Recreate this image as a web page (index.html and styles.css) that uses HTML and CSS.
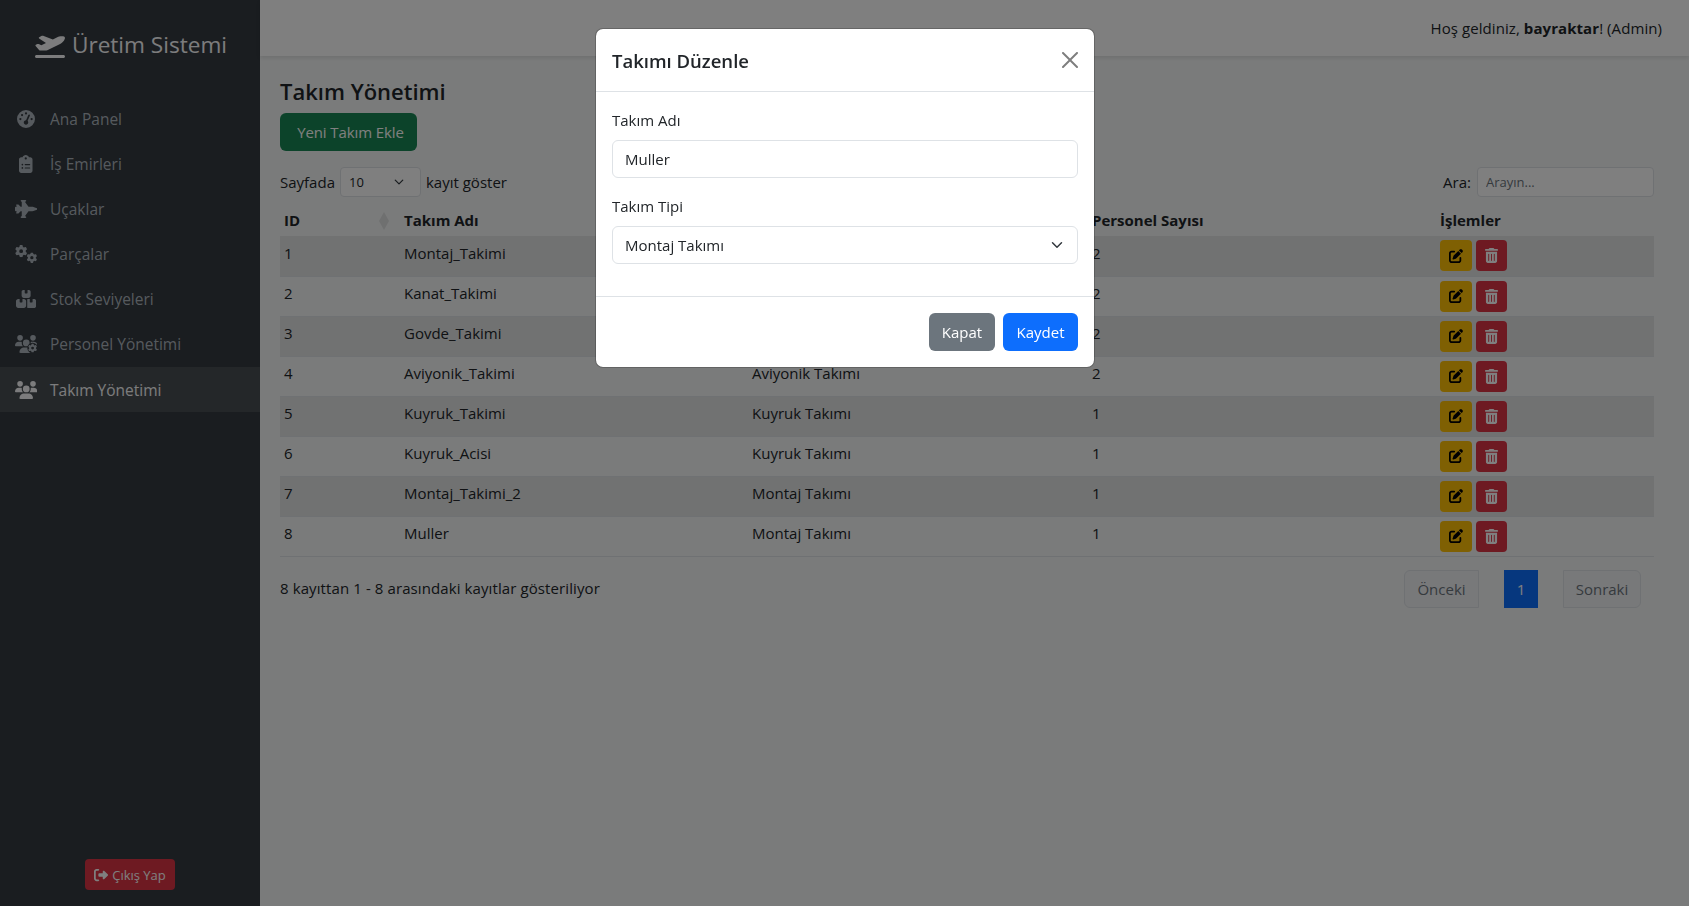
FILE: index.html
```html
<!DOCTYPE html>
<html lang="tr">
<head>
<meta charset="utf-8">
<title>Takım Yönetimi</title>
<link rel="stylesheet" href="styles.css">
</head>
<body>
<aside class="sidebar">
  <div class="brand">
    <svg class="brand-icon" viewBox="0 0 640 512"><path d="M381 114.900L186.100 41.800c-16.700-6.200-35.200-5.300-51.100 2.700L89.100 67.400C78 73 77.200 88.500 87.600 95.200l146.900 94.500L136 240 77.800 214.100c-8.700-3.900-18.800-3.700-27.300 .6L18.300 230.800c-9.300 4.700-11.800 16.800-5 24.700l73.100 85.300c6.100 7.100 15 11.200 24.300 11.200H248.400c5 0 9.900-1.200 14.300-3.400L535.600 212.200c46.500-23.300 82.500-63.300 100.800-112C645.900 75 627.200 48 600.200 48H542.800c-20.200 0-40.200 4.800-58.200 14L381 114.900zM0 480c0 17.700 14.300 32 32 32H608c17.700 0 32-14.300 32-32s-14.300-32-32-32H32c-17.700 0-32 14.300-32 32z"/></svg>
    <span>Üretim Sistemi</span>
  </div>
  <nav class="nav">
    <a class="nav-link"><span class="nav-ico"><svg viewBox="0 0 512 512" class="ico"><path d="M0 256a256 256 0 1 1 512 0A256 256 0 1 1 0 256zM288 96a32 32 0 1 0 -64 0 32 32 0 1 0 64 0zM256 416c35.300 0 64-28.700 64-64c0-17.400-6.900-33.100-18.100-44.600L366 161.700c5.300-12.100-.2-26.300-12.300-31.600s-26.300 .2-31.600 12.300L257.900 288c-.6 0-1.300 0-1.900 0c-35.300 0-64 28.700-64 64s28.700 64 64 64zM176 144a32 32 0 1 0 -64 0 32 32 0 1 0 64 0zM96 288a32 32 0 1 0 0-64 32 32 0 1 0 0 64zm352-32a32 32 0 1 0 -64 0 32 32 0 1 0 64 0z"/></svg></span>Ana Panel</a>
    <a class="nav-link"><span class="nav-ico"><svg viewBox="0 0 384 512" class="ico"><path d="M192 0c-41.800 0-77.400 26.700-90.500 64H64C28.700 64 0 92.700 0 128V448c0 35.300 28.700 64 64 64H320c35.300 0 64-28.700 64-64V128c0-35.300-28.700-64-64-64H282.500C269.400 26.700 233.800 0 192 0zm0 64a32 32 0 1 1 0 64 32 32 0 1 1 0-64zM72 272a24 24 0 1 1 48 0 24 24 0 1 1 -48 0zm104-16H304c8.800 0 16 7.200 16 16s-7.200 16-16 16H176c-8.800 0-16-7.200-16-16s7.200-16 16-16zM72 368a24 24 0 1 1 48 0 24 24 0 1 1 -48 0zm88 0c0-8.800 7.200-16 16-16H304c8.800 0 16 7.200 16 16s-7.200 16-16 16H176c-8.800 0-16-7.200-16-16z"/></svg></span>İş Emirleri</a>
    <a class="nav-link"><span class="nav-ico"><svg viewBox="0 0 640 512" class="ico"><path d="M160 24c0-13.300 10.700-24 24-24H296c13.300 0 24 10.700 24 24s-10.700 24-24 24H280L384 192H500.400c7.700 0 15.300 1.400 22.500 4.100L625 234.400c9 3.400 15 12 15 21.600s-6 18.200-15 21.600L522.900 315.900c-7.200 2.700-14.800 4.100-22.500 4.100H384L280 464h16c13.300 0 24 10.700 24 24s-10.700 24-24 24H184c-13.300 0-24-10.700-24-24s10.700-24 24-24h8V320H160l-54.600 54.600c-6 6-14.100 9.400-22.600 9.400H43c-6.300 0-11-5.900-9.600-12L48 320H24c-13.300 0-24-10.700-24-24V216c0-13.300 10.700-24 24-24H48L33.400 140c-1.400-6.100 3.300-12 9.600-12H82.700c8.500 0 16.600 3.400 22.600 9.400L160 192h32V48h-8c-13.300 0-24-10.700-24-24z"/></svg></span>Uçaklar</a>
    <a class="nav-link"><span class="nav-ico"><svg viewBox="0 0 640 512" class="ico"><svg x="0" y="0" width="350" height="350" viewBox="0 0 512 512"><path d="M495.900 166.600c3.200 8.700 .5 18.400-6.400 24.600l-43.300 39.400c1.100 8.300 1.700 16.800 1.700 25.400s-.6 17.100-1.700 25.400l43.300 39.400c6.900 6.200 9.600 15.900 6.400 24.600c-4.400 11.900-9.700 23.300-15.800 34.300l-4.700 8.100c-6.600 11-14 21.400-22.100 31.200c-5.900 7.200-15.700 9.600-24.500 6.800l-55.700-17.700c-13.400 10.300-28.200 18.900-44 25.400l-12.500 57.100c-2 9.100-9 16.300-18.200 17.800c-13.800 2.300-28 3.500-42.500 3.500s-28.700-1.200-42.500-3.500c-9.200-1.500-16.200-8.700-18.200-17.800l-12.500-57.100c-15.800-6.500-30.600-15.100-44-25.400L83.100 425.900c-8.800 2.800-18.600 .3-24.500-6.800c-8.100-9.800-15.500-20.200-22.100-31.200l-4.700-8.100c-6.100-11-11.400-22.400-15.800-34.300c-3.200-8.700-.5-18.400 6.400-24.600l43.300-39.400C64.600 273.100 64 264.600 64 256s.6-17.100 1.700-25.400L22.400 191.200c-6.900-6.200-9.600-15.900-6.400-24.600c4.400-11.900 9.700-23.300 15.800-34.300l4.700-8.100c6.600-11 14-21.400 22.100-31.200c5.900-7.200 15.700-9.600 24.500-6.800l55.700 17.700c13.400-10.300 28.200-18.900 44-25.400l12.500-57.100c2-9.100 9-16.300 18.200-17.800C227.300 1.200 241.500 0 256 0s28.700 1.200 42.500 3.500c9.200 1.500 16.200 8.700 18.200 17.800l12.500 57.100c15.800 6.500 30.600 15.100 44 25.400l55.700-17.700c8.800-2.800 18.600-.3 24.500 6.800c8.100 9.800 15.500 20.200 22.100 31.200l4.700 8.100c6.100 11 11.400 22.400 15.800 34.300zM256 336a80 80 0 1 0 0-160 80 80 0 1 0 0 160z"/></svg><svg x="330" y="212" width="300" height="300" viewBox="0 0 512 512"><path d="M495.900 166.600c3.200 8.700 .5 18.400-6.400 24.600l-43.300 39.400c1.100 8.300 1.700 16.800 1.700 25.400s-.6 17.100-1.700 25.400l43.300 39.400c6.900 6.200 9.600 15.900 6.400 24.600c-4.400 11.900-9.700 23.300-15.800 34.300l-4.700 8.100c-6.600 11-14 21.400-22.100 31.200c-5.900 7.200-15.700 9.600-24.500 6.800l-55.700-17.700c-13.400 10.300-28.200 18.900-44 25.400l-12.500 57.100c-2 9.100-9 16.300-18.200 17.800c-13.800 2.300-28 3.500-42.500 3.500s-28.700-1.200-42.500-3.500c-9.200-1.500-16.200-8.700-18.200-17.800l-12.500-57.100c-15.800-6.500-30.600-15.100-44-25.400L83.100 425.900c-8.800 2.800-18.600 .3-24.500-6.800c-8.100-9.800-15.500-20.200-22.100-31.200l-4.700-8.100c-6.100-11-11.400-22.400-15.800-34.300c-3.200-8.700-.5-18.400 6.400-24.600l43.300-39.400C64.600 273.100 64 264.600 64 256s.6-17.100 1.700-25.400L22.400 191.200c-6.900-6.200-9.600-15.900-6.400-24.600c4.400-11.900 9.700-23.300 15.800-34.300l4.700-8.100c6.600-11 14-21.400 22.100-31.200c5.900-7.200 15.700-9.600 24.500-6.800l55.700 17.700c13.400-10.300 28.200-18.900 44-25.400l12.500-57.100c2-9.100 9-16.300 18.200-17.800C227.300 1.200 241.500 0 256 0s28.700 1.200 42.500 3.500c9.200 1.500 16.200 8.700 18.200 17.800l12.500 57.100c15.800 6.500 30.600 15.100 44 25.400l55.700-17.700c8.800-2.800 18.600-.3 24.500 6.800c8.100 9.800 15.500 20.200 22.100 31.200l4.700 8.100c6.100 11 11.400 22.400 15.800 34.300zM256 336a80 80 0 1 0 0-160 80 80 0 1 0 0 160z"/></svg></svg></span>Parçalar</a>
    <a class="nav-link"><span class="nav-ico"><svg viewBox="0 0 576 512" class="ico"><path d="M248 0H208c-26.500 0-48 21.500-48 48V160c0 35.300 28.700 64 64 64H352c35.300 0 64-28.700 64-64V48c0-26.500-21.500-48-48-48H328V80c0 8.800-7.200 16-16 16H264c-8.800 0-16-7.200-16-16V0zM64 256c-35.300 0-64 28.700-64 64V448c0 35.300 28.700 64 64 64H224c35.300 0 64-28.700 64-64V320c0-35.300-28.700-64-64-64H184v80c0 8.800-7.200 16-16 16H120c-8.800 0-16-7.200-16-16V256H64zM352 512H512c35.300 0 64-28.700 64-64V320c0-35.300-28.700-64-64-64H472v80c0 8.800-7.200 16-16 16H408c-8.800 0-16-7.200-16-16V256H352c-15 0-28.800 5.100-39.700 13.800c4.900 10.400 7.700 22 7.700 34.200V464c0 12.200-2.800 23.800-7.700 34.200C323.200 506.900 337 512 352 512z"/></svg></span>Stok Seviyeleri</a>
    <a class="nav-link"><span class="nav-ico"><svg viewBox="0 0 640 512" class="ico"><path d="M144 0a80 80 0 1 1 0 160A80 80 0 1 1 144 0zM512 0a80 80 0 1 1 0 160A80 80 0 1 1 512 0zM0 298.700C0 239.800 47.800 192 106.700 192h42.700c15.900 0 31 3.500 44.600 9.700c-1.300 7.200-1.900 14.700-1.900 22.300c0 38.200 16.800 72.500 43.300 96c-.2 0-.4 0-.7 0H21.300C9.600 320 0 310.400 0 298.700zM405.300 320c-.2 0-.4 0-.7 0c26.600-23.500 43.300-57.800 43.300-96c0-7.600-.7-15-1.900-22.300c13.600-6.300 28.700-9.700 44.600-9.700h42.700C592.200 192 640 239.800 640 298.700c0 11.800-9.600 21.300-21.300 21.300H405.300zM224 224a96 96 0 1 1 192 0 96 96 0 1 1 -192 0zM128 485.300C128 411.700 187.700 352 261.300 352H378.700C452.300 352 512 411.700 512 485.300c0 14.700-11.900 26.700-26.700 26.700H154.700c-14.700 0-26.700-11.900-26.700-26.700z"/><circle class="gear-halo" cx="500" cy="372" r="150"/><svg x="372" y="244" width="256" height="256" viewBox="0 0 512 512"><path d="M495.900 166.600c3.200 8.700 .5 18.400-6.400 24.600l-43.300 39.400c1.100 8.300 1.700 16.800 1.700 25.400s-.6 17.100-1.700 25.400l43.300 39.400c6.900 6.200 9.600 15.900 6.400 24.600c-4.400 11.900-9.700 23.300-15.800 34.300l-4.700 8.100c-6.600 11-14 21.400-22.100 31.200c-5.900 7.200-15.700 9.600-24.500 6.800l-55.700-17.700c-13.400 10.300-28.200 18.900-44 25.400l-12.500 57.100c-2 9.100-9 16.300-18.200 17.800c-13.800 2.300-28 3.500-42.500 3.500s-28.700-1.200-42.500-3.500c-9.200-1.500-16.200-8.700-18.200-17.800l-12.500-57.100c-15.800-6.500-30.600-15.100-44-25.400L83.100 425.900c-8.800 2.800-18.600 .3-24.500-6.800c-8.100-9.800-15.500-20.200-22.100-31.200l-4.700-8.100c-6.100-11-11.400-22.400-15.800-34.300c-3.200-8.700-.5-18.400 6.400-24.600l43.300-39.400C64.600 273.100 64 264.600 64 256s.6-17.100 1.700-25.400L22.400 191.200c-6.900-6.200-9.600-15.900-6.400-24.600c4.400-11.900 9.700-23.300 15.800-34.300l4.700-8.100c6.600-11 14-21.400 22.100-31.200c5.900-7.200 15.700-9.600 24.500-6.800l55.700 17.700c13.400-10.300 28.200-18.900 44-25.400l12.500-57.100c2-9.100 9-16.300 18.200-17.800C227.300 1.200 241.500 0 256 0s28.700 1.200 42.500 3.500c9.200 1.500 16.200 8.700 18.200 17.800l12.500 57.100c15.800 6.500 30.600 15.100 44 25.400l55.700-17.700c8.800-2.800 18.600-.3 24.500 6.800c8.100 9.800 15.500 20.200 22.100 31.200l4.700 8.100c6.100 11 11.400 22.400 15.800 34.300zM256 336a80 80 0 1 0 0-160 80 80 0 1 0 0 160z"/></svg></svg></span>Personel Yönetimi</a>
    <a class="nav-link active"><span class="nav-ico"><svg viewBox="0 0 640 512" class="ico"><path d="M144 0a80 80 0 1 1 0 160A80 80 0 1 1 144 0zM512 0a80 80 0 1 1 0 160A80 80 0 1 1 512 0zM0 298.700C0 239.800 47.800 192 106.700 192h42.700c15.900 0 31 3.500 44.600 9.700c-1.300 7.200-1.900 14.700-1.900 22.300c0 38.200 16.800 72.500 43.300 96c-.2 0-.4 0-.7 0H21.300C9.600 320 0 310.400 0 298.700zM405.300 320c-.2 0-.4 0-.7 0c26.600-23.500 43.300-57.800 43.300-96c0-7.600-.7-15-1.900-22.300c13.600-6.300 28.700-9.700 44.600-9.700h42.700C592.200 192 640 239.800 640 298.700c0 11.800-9.600 21.300-21.300 21.300H405.300zM224 224a96 96 0 1 1 192 0 96 96 0 1 1 -192 0zM128 485.300C128 411.700 187.700 352 261.300 352H378.700C452.300 352 512 411.700 512 485.300c0 14.700-11.900 26.700-26.700 26.700H154.700c-14.700 0-26.700-11.900-26.700-26.700z"/></svg></span>Takım Yönetimi</a>
  </nav>
  <div class="logout-wrap">
    <a class="logout"><svg viewBox="0 0 512 512" class="i14"><path d="M377.900 105.900L500.700 228.700c7.200 7.200 11.300 17.100 11.300 27.300s-4.100 20.100-11.300 27.300L377.900 406.100c-6.400 6.400-15 9.900-24 9.900c-18.700 0-33.900-15.200-33.900-33.900l0-62.100-128 0c-17.700 0-32-14.300-32-32l0-64c0-17.700 14.300-32 32-32l128 0 0-62.100c0-18.700 15.200-33.900 33.900-33.900c9 0 17.600 3.600 24 9.900zM160 96L96 96c-17.700 0-32 14.300-32 32l0 256c0 17.700 14.300 32 32 32l64 0c17.700 0 32 14.300 32 32s-14.300 32-32 32l-64 0c-53 0-96-43-96-96L0 128C0 75 43 32 96 32l64 0c17.700 0 32 14.300 32 32s-14.300 32-32 32z"/></svg>Çıkış Yap</a>
  </div>
</aside>

<main class="main">
  <header class="topbar"><span>Hoş geldiniz, <b>bayraktar</b>! (Admin)</span></header>
  <section class="content">
    <h2 class="page-title">Takım Yönetimi</h2>
    <button class="btn btn-success add-btn">Yeni Takım Ekle</button>
    <div class="dt-top">
      <label class="dt-len">Sayfada <select class="mini-select"><option>10</option></select> kayıt göster</label>
      <label class="dt-search">Ara: <input class="mini-input" placeholder="Arayın..."></label>
    </div>
    <table class="tbl">
      <thead>
        <tr>
          <th class="c-id">ID<svg class="sort" viewBox="0 0 10 18"><path d="M5 0l5 9-5 9-5-9z"/></svg></th>
          <th class="c-name">Takım Adı</th>
          <th class="c-type">Takım Tipi</th>
          <th class="c-count">Personel Sayısı</th>
          <th class="c-act">İşlemler</th>
        </tr>
      </thead>
      <tbody id="rows"></tbody>
    </table>
    <div class="dt-bottom">
      <span class="dt-info">8 kayıttan 1 - 8 arasındaki kayıtlar gösteriliyor</span>
      <div class="pager">
        <a class="pg pg-prev">Önceki</a>
        <a class="pg pg-cur">1</a>
        <a class="pg pg-next">Sonraki</a>
      </div>
    </div>
  </section>
</main>

<div class="backdrop"></div>
<div class="modal-wrap">
  <div class="modal">
    <div class="modal-header">
      <h5 class="modal-title">Takımı Düzenle</h5>
      <button class="btn-close" aria-label="Kapat"></button>
    </div>
    <div class="modal-body">
      <div class="field">
        <label class="form-label">Takım Adı</label>
        <input class="form-control" value="Muller">
      </div>
      <div class="field">
        <label class="form-label">Takım Tipi</label>
        <select class="form-control form-select"><option>Montaj Takımı</option></select>
      </div>
    </div>
    <div class="modal-footer">
      <button class="btn btn-secondary btn-kapat">Kapat</button>
      <button class="btn btn-primary btn-kaydet">Kaydet</button>
    </div>
  </div>
</div>
<template id="row-actions">
  <a class="act act-edit"><svg viewBox="0 0 512 512"><path d="M471.600 21.700c-21.900-21.900-57.300-21.900-79.200 0L362.300 51.700l97.900 97.900 30.100-30.100c21.900-21.900 21.900-57.300 0-79.200L471.600 21.700zm-299.200 220c-6.100 6.100-10.800 13.600-13.500 21.900l-29.600 88.800c-2.900 8.600-.6 18.100 5.800 24.600s15.900 8.700 24.600 5.800l88.800-29.600c8.200-2.700 15.700-7.400 21.900-13.500L437.700 172.300 339.700 74.300 172.400 241.700zM96 64C43 64 0 107 0 160V416c0 53 43 96 96 96H352c53 0 96-43 96-96V320c0-17.700-14.300-32-32-32s-32 14.300-32 32v96c0 17.700-14.300 32-32 32H96c-17.700 0-32-14.300-32-32V160c0-17.700 14.300-32 32-32h96c17.700 0 32-14.300 32-32s-14.300-32-32-32H96z"/></svg></a>
  <a class="act act-del"><svg viewBox="0 0 448 512"><path d="M135.200 17.700C140.600 6.800 151.700 0 163.800 0H284.200c12.100 0 23.200 6.800 28.600 17.700L320 32h96c17.700 0 32 14.300 32 32s-14.300 32-32 32H32C14.300 96 0 81.700 0 64S14.300 32 32 32h96l7.200-14.300zM32 128H416V448c0 35.300-28.700 64-64 64H96c-35.300 0-64-28.700-64-64V128zm96 64c-8.800 0-16 7.200-16 16V432c0 8.800 7.200 16 16 16s16-7.200 16-16V208c0-8.800-7.200-16-16-16zm96 0c-8.800 0-16 7.200-16 16V432c0 8.800 7.200 16 16 16s16-7.200 16-16V208c0-8.800-7.200-16-16-16zm96 0c-8.800 0-16 7.200-16 16V432c0 8.800 7.200 16 16 16s16-7.200 16-16V208c0-8.800-7.200-16-16-16z"/></svg></a>
</template>
<script>
  var data = [
    [1,"Montaj_Takimi","Montaj Takımı",2],[2,"Kanat_Takimi","Kanat Takımı",2],
    [3,"Govde_Takimi","Gövde Takımı",2],[4,"Aviyonik_Takimi","Aviyonik Takımı",2],
    [5,"Kuyruk_Takimi","Kuyruk Takımı",1],[6,"Kuyruk_Acisi","Kuyruk Takımı",1],
    [7,"Montaj_Takimi_2","Montaj Takımı",1],[8,"Muller","Montaj Takımı",1]];
  var tb = document.getElementById("rows"), tpl = document.getElementById("row-actions");
  data.forEach(function (r) {
    var tr = document.createElement("tr");
    r.forEach(function (v) { var td = document.createElement("td"); td.textContent = v; tr.appendChild(td); });
    var td = document.createElement("td"); td.className = "acts";
    td.appendChild(tpl.content.cloneNode(true)); tr.appendChild(td); tb.appendChild(tr);
  });
</script>
</body>
</html>
```

FILE: styles.css
```css
* { box-sizing: border-box; }
html, body { height: 100%; }
body {
  margin: 0;
  display: flex;
  height: 906px;
  overflow: hidden;
  font-family: "Open Sans", "Noto Sans", sans-serif;
  font-size: 15px;
  line-height: 24px;
  color: #212529;
  background: #f5f7f7;
}
svg { fill: currentColor; display: block; }

/* sidebar */
.sidebar {
  width: 260px;
  flex: none;
  background: #343a40;
  color: #adb5bd;
  display: flex;
  flex-direction: column;
  height: 906px;
}
.brand {
  height: 96px;
  padding: 29px 0 0 2px;
  display: flex;
  justify-content: center;
  gap: 7px;
  font-size: 22.6px;
  line-height: 32px;
  color: #f8f9fa;
  font-weight: 400;
}
.brand-icon { width: 30px; height: 24px; margin-top: 5px; }
.nav { display: flex; flex-direction: column; }
.nav-link {
  height: 45.17px;
  display: flex;
  align-items: center;
  padding-left: 14px;
  color: #adb5bd;
  font-size: 15.5px;
}
.nav-link.active { background: rgba(255,255,255,.1); color: #f8f9fa; }
.nav-ico { width: 24px; margin-right: 12px; display: flex; justify-content: center; flex: none; }
.ico { height: 18px; width: auto; flex: none; overflow: hidden; }
.gear-halo { fill: #343a40; }
.logout-wrap { margin-top: auto; display: flex; justify-content: center; padding-bottom: 16px; }
.logout {
  display: flex; align-items: center; gap: 4px;
  height: 31px; width: 90px; justify-content: center;
  background: #dc3545; color: #fff; border-radius: 4px;
  font-size: 13px;
}
.i14 { width: 14px; height: 14px; }

/* main */
.main { flex: 1; min-width: 0; display: flex; flex-direction: column; }
.topbar {
  height: 56px;
  flex: none;
  background: #fff;
  box-shadow: 0 2px 4px rgba(0,0,0,.1);
  display: flex;
  justify-content: flex-end;
  align-items: center;
  padding-right: 27px;
  padding-bottom: 1px;
  letter-spacing: .07px;
}
.content { padding: 20px 35px 0 20px; }
.page-title { margin: 0 0 7px; padding-top: 1px; font-size: 22px; line-height: 29px; font-weight: 600; }
.btn {
  display: inline-block;
  height: 38px;
  border: 1px solid transparent;
  border-radius: 6px;
  font: inherit;
  color: #fff;
  padding: 0;
}
.btn-success { background: #198754; }
.add-btn { width: 137px; padding-left: 4px; display: block; letter-spacing: -.1px; }
.dt-top {
  margin: 16px 0 9px;
  height: 30px;
  display: flex;
  justify-content: space-between;
  align-items: center;
}
.dt-len { display: flex; align-items: center; gap: 5px; }
.mini-select {
  width: 81px; height: 30px;
  appearance: none;
  border: 1px solid #dee2e6; border-radius: 4px;
  font: inherit; font-size: 13px; color: #212529;
  padding: 0 8px;
  background: #fff url("data:image/svg+xml,%3csvg xmlns='http://www.w3.org/2000/svg' viewBox='0 0 16 16'%3e%3cpath fill='none' stroke='%23343a40' stroke-linecap='round' stroke-linejoin='round' stroke-width='2' d='m2 5 6 6 6-6'/%3e%3c/svg%3e") no-repeat right 15px center / 12px 10px;
}
.dt-search { display: flex; align-items: center; gap: 6px; }
.mini-input {
  width: 177px; height: 30px;
  border: 1px solid #dee2e6; border-radius: 4px;
  font: inherit; font-size: 13px;
  padding: 0 8px;
  background: #fff;
}
.mini-input::placeholder { color: #6c757d; opacity: 1; }

.tbl { width: 100%; table-layout: fixed; border-collapse: collapse; }
.tbl th { height: 30px; padding: 0 4px 2px; text-align: left; font-weight: 700; position: relative; border-bottom: 0; font-size: 15px; }
.c-id { width: 120px; }
.c-name { width: 348px; }
.c-type { width: 340px; }
.c-count { width: 348px; }
.sort { position: absolute; top: 6px; right: 11px; width: 10px; height: 18px; fill: #dfe0e1; }
.tbl td { height: 40px; padding: 0 4px 6px; border-bottom: 1px solid #dee2e6; vertical-align: middle; }
.tbl tbody tr:nth-child(odd) td { background: rgba(0,0,0,.07); }
.tbl td.acts { padding: 0 4px; font-size: 0; white-space: nowrap; }
.act { display: inline-flex; width: 32px; height: 31px; border-radius: 4px; align-items: center; justify-content: center; vertical-align: middle; }
.act + .act { margin-left: 4px; width: 31px; }
.act-edit { background: #ffc107; color: #000; }
.act-edit svg { width: 14px; height: 14px; }
.act-del { background: #dc3545; color: #fff; }
.act-del svg { width: 13px; height: 15px; }

.dt-bottom { margin-top: 13px; display: flex; justify-content: space-between; align-items: center; padding-right: 13px; }
.dt-info { letter-spacing: .1px; margin-bottom: 1px; }
.pager { display: flex; gap: 25px; }
.pg { height: 38px; display: flex; align-items: center; justify-content: center; color: #6c757d; background: #f1f3f5; border: 1px solid #dee2e6; }
.pg-prev { width: 75px; border-radius: 6px 0 0 6px; }
.pg-cur { width: 34px; background: #0d6efd; border-color: #0d6efd; color: #fff; }
.pg-next { width: 78px; border-radius: 0 6px 6px 0; }

/* modal */
.backdrop { position: fixed; inset: 0; background: rgba(0,0,0,.5); }
.modal-wrap { position: fixed; inset: 0; display: flex; justify-content: center; align-items: flex-start; padding: 28px 0 0 1px; }
.modal { width: 500px; background: #fff; background-clip: padding-box; border: 1px solid rgba(0,0,0,.2); border-radius: 8px; }
.modal-header { height: 63px; padding: 1px 16px 0; display: flex; align-items: center; justify-content: space-between; border-bottom: 1px solid #dee2e6; }
.modal-title { margin: 0; font-size: 18.5px; line-height: 30px; font-weight: 600; }
.btn-close {
  width: 16px; height: 16px; border: 0; padding: 0; opacity: .5; margin-bottom: 2px;
  background: transparent url("data:image/svg+xml,%3csvg xmlns='http://www.w3.org/2000/svg' viewBox='0 0 16 16' fill='%23000'%3e%3cpath d='M.293.293a1 1 0 0 1 1.414 0L8 6.586 14.293.293a1 1 0 1 1 1.414 1.414L9.414 8l6.293 6.293a1 1 0 0 1-1.414 1.414L8 9.414l-6.293 6.293a1 1 0 0 1-1.414-1.414L6.586 8 .293 1.707a1 1 0 0 1 0-1.414z'/%3e%3c/svg%3e") center / 16px no-repeat;
}
.modal-body { padding: 16px; }
.field { margin-bottom: 16px; }
.form-label { display: block; margin-bottom: 8px; }
.form-control {
  display: block; width: 100%; height: 38px;
  padding: 0 12px;
  border: 1px solid #dee2e6; border-radius: 6px;
  font: inherit; color: #212529; background: #fff;
}
.form-select {
  appearance: none;
  background: #fff url("data:image/svg+xml,%3csvg xmlns='http://www.w3.org/2000/svg' viewBox='0 0 16 16'%3e%3cpath fill='none' stroke='%23343a40' stroke-linecap='round' stroke-linejoin='round' stroke-width='2' d='m2 5 6 6 6-6'/%3e%3c/svg%3e") no-repeat right 12px center / 16px 12px;
}
.modal-footer { padding: 16px; display: flex; justify-content: flex-end; gap: 8px; border-top: 1px solid #dee2e6; }
.btn-secondary { background: #6c757d; }
.btn-primary { background: #0d6efd; }
.btn-kapat { width: 66px; }
.btn-kaydet { width: 75px; }
```
